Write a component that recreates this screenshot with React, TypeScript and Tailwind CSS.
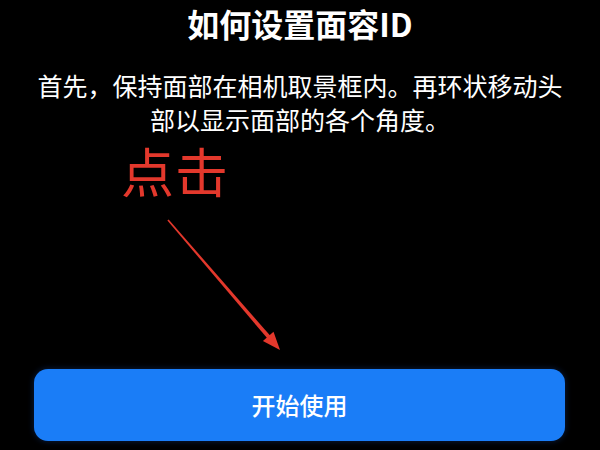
import React from "react";

export default function App() {
  return (
    <div
      className="relative w-[600px] h-[450px] overflow-hidden bg-black text-white"
      style={{ fontFamily: '"Noto Sans CJK SC", "Noto Sans", sans-serif' }}
    >
      <div className="flex flex-col items-center pt-[3px]">
        <h1 className="text-[32px] leading-[40px] font-semibold tracking-[0px]">如何设置面容ID</h1>
        <p className="mt-[25px] w-[535px] text-center text-[25px] leading-[34px] font-normal">
          首先，保持面部在相机取景框内。再环状移动头部以显示面部的各个角度。
        </p>
      </div>

      <div className="absolute left-[34px] top-[369px] w-[531px] h-[72px] rounded-[14px] bg-[#1a7df7] flex items-center justify-center shadow-[0_0_6px_rgba(30,90,200,0.35)]">
        <span className="text-[24px] font-medium text-white">开始使用</span>
      </div>

      <div className="absolute left-[121px] top-[138px] text-[53px] leading-[64px] tracking-[1px] font-normal text-[#e3382c]">
        点击
      </div>

      <svg className="absolute left-0 top-0" width="600" height="450" viewBox="0 0 600 450">
        <polygon
          points="167.4,220.5 168.6,219.5 270.5,336.0 267.5,338.6"
          fill="#e3382c"
        />
        <polygon points="280,350 262.9,341.0 273.5,331.8" fill="#e3382c" />
      </svg>
    </div>
  );
}
